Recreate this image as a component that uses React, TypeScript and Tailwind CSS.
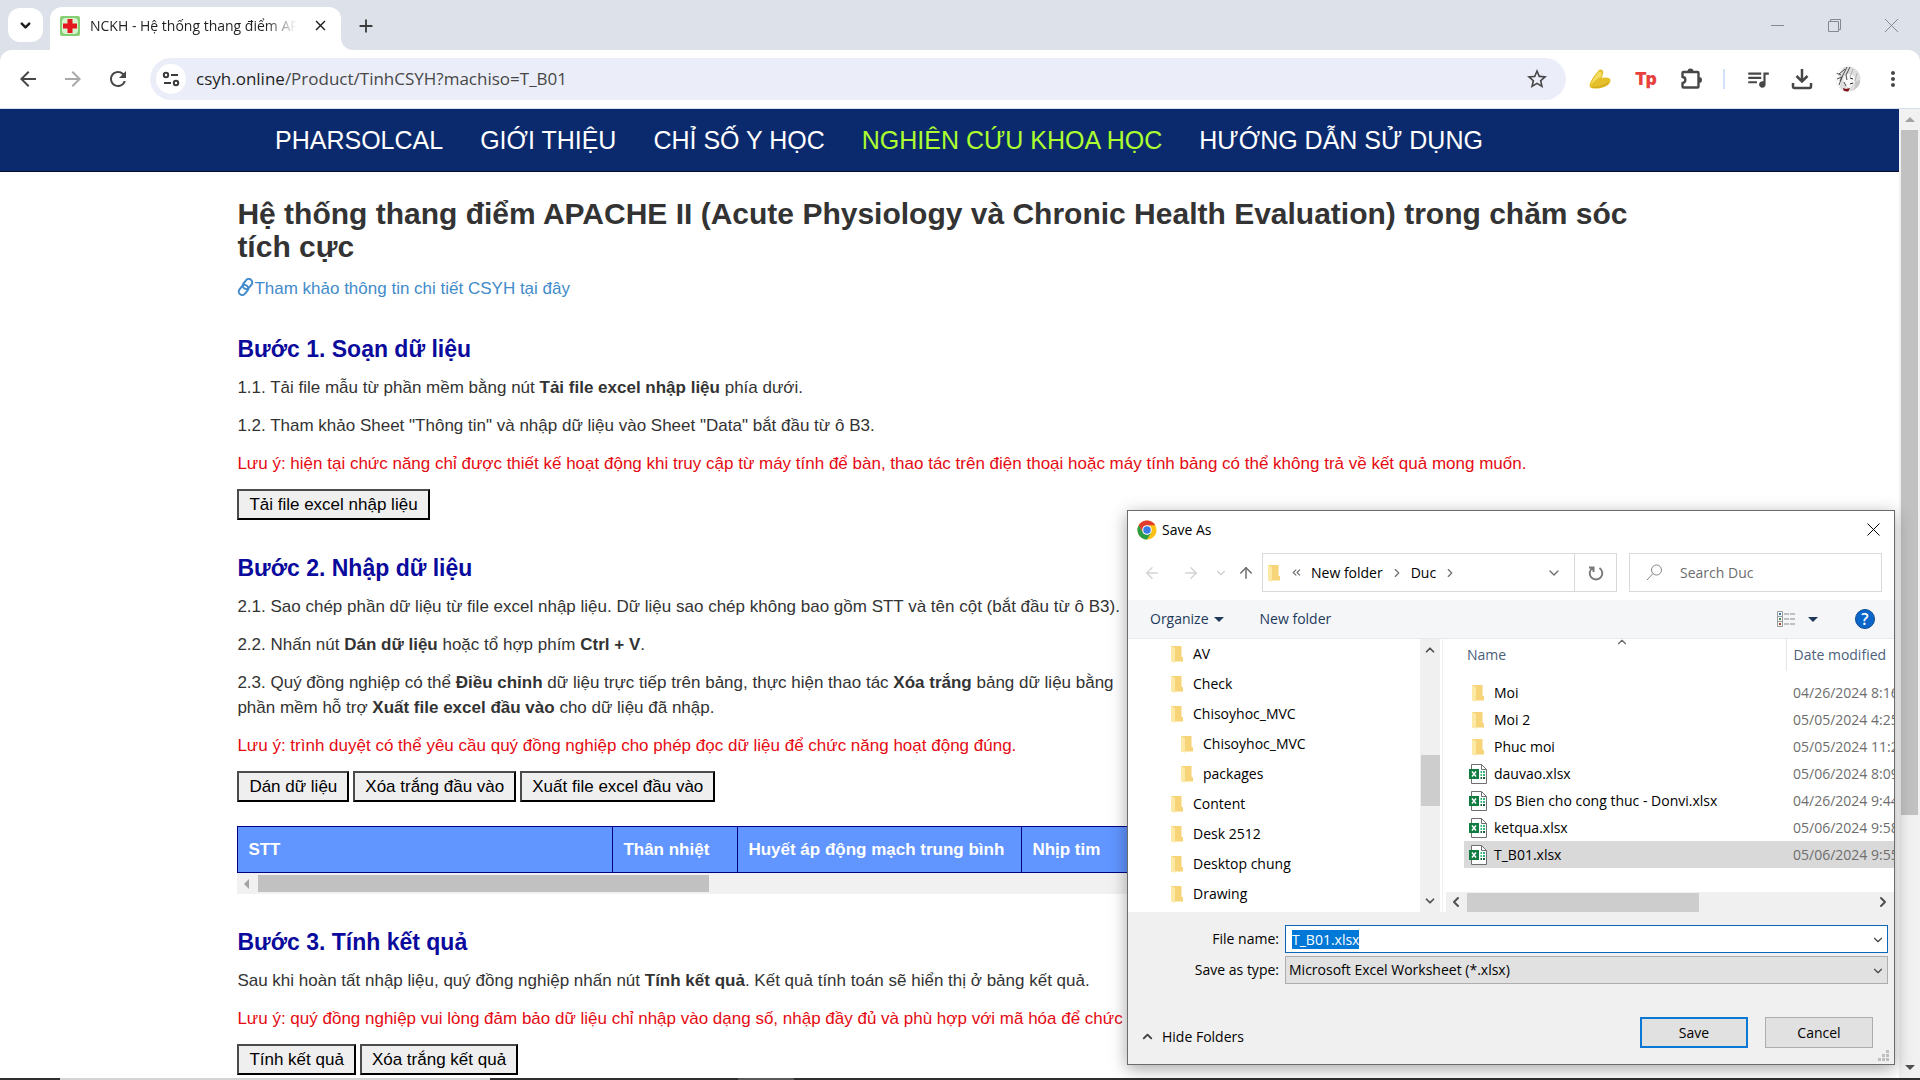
import { useEffect, useRef } from 'react';
import type { ReactNode } from 'react';
import {
  MdAdd,
  MdArrowBack,
  MdArrowForward,
  MdClose,
  MdMoreVert,
  MdQueueMusic,
  MdRefresh,
  MdStarOutline
} from 'react-icons/md';
import { ArrowLeft, ArrowRight, ArrowUp, ChevronDown, ChevronLeft, ChevronRight, ChevronUp, ChevronsLeft } from 'lucide-react';

const navItems = [
  { label: 'PHARSOLCAL' },
  { label: 'GIỚI THIỆU' },
  { label: 'CHỈ SỐ Y HỌC' },
  { label: 'NGHIÊN CỨU KHOA HỌC', active: true },
  { label: 'HƯỚNG DẪN SỬ DỤNG' }
];

const treeItems = [
  { name: 'AV' },
  { name: 'Check' },
  { name: 'Chisoyhoc_MVC' },
  { name: 'Chisoyhoc_MVC', nested: true },
  { name: 'packages', nested: true },
  { name: 'Content' },
  { name: 'Desk 2512' },
  { name: 'Desktop chung' },
  { name: 'Drawing' }
];

const files = [
  { name: 'Moi', date: '04/26/2024 8:16 AM', folder: true },
  { name: 'Moi 2', date: '05/05/2024 4:25 PM', folder: true },
  { name: 'Phuc moi', date: '05/05/2024 11:29 AM', folder: true },
  { name: 'dauvao.xlsx', date: '05/06/2024 8:09 AM' },
  { name: 'DS Bien cho cong thuc - Donvi.xlsx', date: '04/26/2024 9:44 AM' },
  { name: 'ketqua.xlsx', date: '05/06/2024 9:58 AM' },
  { name: 'T_B01.xlsx', date: '05/06/2024 9:55 AM', selected: true }
];

/* ---------- icons ---------- */

function CrossFavicon() {
  return (
    <svg width="20" height="20" viewBox="0 0 20 20" className="shrink-0">
      <rect width="20" height="20" rx="2" fill="#86cf73" />
      <rect x="2" y="2" width="16" height="16" rx="4" fill="#d8f3cf" />
      <path d="M7.500 3h5v4.500h4.500v5h-4.500v4.500h-5v-4.500h-4.500v-5h4.500z" fill="#e3171c" />
    </svg>
  );
}

function TuneIcon() {
  return (
    <svg width="18" height="16" viewBox="0 0 18 16" fill="none" stroke="#3c3c3c" strokeWidth="2">
      <circle cx="4" cy="4" r="2.200" />
      <path d="M9 4h7M2 12h7" />
      <circle cx="14" cy="12" r="2.200" />
    </svg>
  );
}

function BananaIcon() {
  return (
    <svg width="22" height="20" viewBox="0 0 22 20">
      <path d="M10 1C13-.5 15 2 14 5C13.500 7 13 8 13 9C17 8 21 8.500 21.500 11C22 14 18 18 12 19C7 20 1 20 .5 17C.5 13 6 5 10 1Z" fill="#e6c02b" />
      <path d="M10 2.500C6 7 3 12 2 16C5 12 9 9 12 8C13 5 13 2 10 2.500Z" fill="#f4dd62" />
      <path d="M3 18.200c6 .3 12-1 16.500-4.500" fill="none" stroke="#cfa51c" strokeWidth="1.200" />
    </svg>
  );
}

function PuzzleIcon() {
  return (
    <svg width="24" height="24" viewBox="0 0 24 24" fill="none" stroke="#474747" strokeWidth="2.400" strokeLinejoin="round">
      <path d="M4.500 5h14a1 1 0 0 1 1 1v13.500a1 1 0 0 1-1 1h-14a1 1 0 0 1-1-1V16c3.800 0 3.800-6 0-6V6a1 1 0 0 1 1-1z" />
      <path d="M8.500 4.500a3 3 0 0 1 6 0zM20 10a3 3 0 0 1 0 6z" fill="#474747" stroke="none" />
    </svg>
  );
}

function DownloadTrayIcon() {
  return (
    <svg width="22" height="22" viewBox="0 0 22 22" fill="none" stroke="#474747" strokeWidth="2.500">
      <path d="M11 1v12M5.500 8l5.500 5.500L16.500 8M2 15v3.500a1.500 1.500 0 0 0 1.500 1.500h15a1.500 1.500 0 0 0 1.500-1.500V15" />
    </svg>
  );
}

function Avatar() {
  return (
    <svg width="26" height="26" viewBox="0 0 26 26">
      <defs>
        <clipPath id="avatar">
          <circle cx="13" cy="13" r="12.500" />
        </clipPath>
      </defs>
      <g clipPath="url(#avatar)">
        <rect width="26" height="26" fill="#dedede" />
        <path d="M0 0h9L4 10l2 6-3 10H0z" fill="#fafafa" />
        <path d="M10 9c3-2 9-1 10 3 0 4-3 8-6 10-3-1-6-6-6-9z" fill="#f8f8f8" />
        <path d="M12 1L8 9l-3 6M15 1l-4 8 1 5M1 7l5 2M2 13l5-2-3 8M10 3L4 8M9 16l2 4" stroke="#4c4c4c" strokeWidth="1" fill="none" />
        <path d="M18 3l-3 8M22 7l-2 8" stroke="#b0b0b0" strokeWidth="1" fill="none" />
        <path d="M15 12l3 1M15 18l3-1" stroke="#222" strokeWidth="1" />
        <path d="M8 22l3 1 4-1-2 4H9z" fill="#7d0f16" />
        <path d="M20 16c1 3 0 6-3 9h8V14z" fill="#c6c6c6" />
      </g>
    </svg>
  );
}

function ChromeLogo() {
  return (
    <svg width="20" height="20" viewBox="0 0 48 48" className="shrink-0">
      <circle cx="24" cy="24" r="23" fill="#fbc116" />
      <path d="M24 12.500h19.900A23 23 0 0 0 4.100 12.500L14 29.700z" fill="#e33b2e" />
      <path d="M4.100 12.500A23 23 0 0 0 24 47l10-17.300-10 5.800-10-5.800z" fill="#2a9d48" />
      <circle cx="24" cy="24" r="11.500" fill="#fff" />
      <circle cx="24" cy="24" r="9" fill="#3a7be8" />
    </svg>
  );
}

function FolderIcon() {
  return (
    <svg width="12" height="18" viewBox="0 0 12 18" className="shrink-0">
      <path d="M0 1h10.500v10.500l1.500 1v4H0z" fill="#f6d477" />
      <path d="M0 1l4 2v15l-4-2z" fill="#fde9a6" />
    </svg>
  );
}

function ExcelIcon() {
  return (
    <svg width="18" height="20" viewBox="0 0 18 20" className="shrink-0">
      <path d="M2.500.5h10l5 5v14h-15z" fill="#fff" stroke="#6f6f6f" />
      <path d="M12.500.5v5h5" fill="none" stroke="#6f6f6f" />
      <path d="M11.500 8h1.500M14 8h2M11.500 11h1.500M14 11h2" stroke="#33b87a" strokeWidth="2" />
      <path d="M11.500 14h1.500M14 14h2" stroke="#185c37" strokeWidth="2" />
      <rect y="5" width="10" height="10" fill="#107c41" />
      <path d="M3 7.500l4 5M7 7.500l-4 5" stroke="#fff" strokeWidth="1.500" />
    </svg>
  );
}

function ChainIcon() {
  return (
    <svg width="17" height="18" viewBox="0 0 17 18" fill="none" stroke="#428bca" strokeWidth="2" className="inline-block align-[-2px]">
      <rect x="5" y="2.500" width="11" height="7" rx="3.500" transform="rotate(-52 10.500 6)" />
      <rect x="1" y="8.500" width="11" height="7" rx="3.500" transform="rotate(-52 6.500 12)" />
    </svg>
  );
}

function Triangle({ direction, color }: { direction: 'up' | 'down' | 'left'; color: string }) {
  const shapes = { up: 'M1 8L6 3l5 5z', down: 'M1 4l5 5 5-5z', left: 'M8 1L3 6l5 5z' };
  return (
    <svg width="12" height="12" viewBox="0 0 12 12" fill={color}>
      <path d={shapes[direction]} />
    </svg>
  );
}

/* ---------- browser ---------- */

function TabStrip() {
  return (
    <div className="flex h-[50px] items-end bg-[#dde1e9]">
      <button className="mb-2 ml-2 flex h-[34px] w-[35px] items-center justify-center rounded-xl bg-white" title="Search tabs">
        <ChevronDown size={15} strokeWidth={4} color="#1f1f1f" />
      </button>
      <div className="ml-[7px] flex h-[43px] w-[291px] items-center rounded-t-xl bg-white pr-3 pb-1.5 pl-2.5">
        <CrossFavicon />
        <span className="ml-2.5 w-[207px] overflow-hidden bg-linear-to-r from-[#1f1f1f] from-85% to-transparent bg-clip-text text-sm whitespace-nowrap text-transparent">
          NCKH - Hệ thống thang điểm APACHE II
        </span>
        <button className="ml-auto" title="Close tab">
          <MdClose size={17} color="#1f1f1f" />
        </button>
      </div>
      {/* flare where the active tab meets the toolbar */}
      <svg width="12" height="12" viewBox="0 0 12 12" fill="#fff">
        <path d="M0 0v12h12A12 12 0 0 1 0 0z" />
      </svg>
      <button className="mb-[13px] ml-0.5" title="New tab">
        <MdAdd size={22} color="#3c3c3c" />
      </button>
      <div className="mr-[22px] mb-[18px] ml-auto flex gap-11 text-[#85888f]">
        <button title="Minimize">
          <svg width="13" height="13" viewBox="0 0 13 13" stroke="currentColor">
            <path d="M0 6.500h13" />
          </svg>
        </button>
        <button title="Restore">
          <svg width="13" height="13" viewBox="0 0 13 13" fill="none" stroke="currentColor">
            <path d="M.5 2.500h10v10h-10zM2.500 2.500v-2h10v10h-2" />
          </svg>
        </button>
        <button title="Close">
          <svg width="13" height="13" viewBox="0 0 13 13" stroke="currentColor">
            <path d="M0 0l13 13M13 0L0 13" />
          </svg>
        </button>
      </div>
    </div>
  );
}

function Toolbar() {
  return (
    <div className="bg-[#dde1e9]">
      <div className="flex h-[59px] items-center rounded-t-xl border-b border-[#d5dfee] bg-white pr-[15px] pl-4">
        <div className="flex gap-[21px]">
          <button title="Back"><MdArrowBack size={24} color="#474747" /></button>
          <button title="Forward"><MdArrowForward size={24} color="#a9a9a9" /></button>
          <button title="Reload"><MdRefresh size={24} color="#474747" /></button>
        </div>
        <div className="ml-5 flex h-[42px] min-w-0 flex-1 items-center rounded-full bg-[#ebeef8] pr-[17px] pl-1.5">
          <button className="flex size-[30px] shrink-0 items-center justify-center rounded-full bg-white" title="Site information">
            <TuneIcon />
          </button>
          <p className="ml-2.5 flex-1 truncate text-[17px] text-[#474747]">
            <span className="text-[#1f1f1f]">csyh.online</span>/Product/TinhCSYH?machiso=T_B01
          </p>
          <button title="Bookmark this tab"><MdStarOutline size={24} color="#474747" stroke="#474747" strokeWidth={0} /></button>
        </div>
        <div className="ml-[23px] flex items-center">
          <button title="Banana"><BananaIcon /></button>
          <button className="ml-6 w-5 font-['Inter'] text-[17px] leading-5 font-black text-[#e8403c]" title="Tp">Tp</button>
          <button className="ml-6" title="Extensions"><PuzzleIcon /></button>
          <span className="mr-5 ml-5 h-5 w-0.5 bg-[#d3e1f8]" />
          <button title="Media controls"><MdQueueMusic size={26} color="#474747" /></button>
          <button className="ml-5" title="Downloads"><DownloadTrayIcon /></button>
          <button className="ml-[22px]" title="Profile"><Avatar /></button>
          <button className="ml-5" title="Menu"><MdMoreVert size={24} color="#474747" /></button>
        </div>
      </div>
    </div>
  );
}

/* ---------- page ---------- */

function PageButton({ children }: { children: ReactNode }) {
  return (
    <button className="h-[31px] border-2 border-t-[#4b4b4b] border-r-black border-b-black border-l-[#4b4b4b] bg-[#efefef] px-2.5 leading-[25px] text-black">
      {children}
    </button>
  );
}

function Step({ title, children }: { title: string; children: ReactNode }) {
  return (
    <section className="mt-9 flex flex-col gap-[13px]">
      <h3 className="text-[23px] leading-[25px] font-bold text-[#0a0a9c]">{title}</h3>
      {children}
    </section>
  );
}

function Note({ children }: { children: ReactNode }) {
  return <p className="text-[#e50b12]">{children}</p>;
}

function InputTable() {
  return (
    <div className="mt-[11px] overflow-hidden">
      <table className="w-[1600px] table-fixed border-collapse">
        <thead>
          <tr className="h-[46px] bg-[#6195ff] text-left text-white">
            <th className="w-[375px] border border-[#000080] px-2.5">STT</th>
            <th className="w-[125px] border border-[#000080] px-2.5">Thân nhiệt</th>
            <th className="w-[284px] border border-[#000080] px-2.5 whitespace-nowrap">Huyết áp động mạch trung bình</th>
            <th className="border border-[#000080] px-2.5">Nhịp tim</th>
          </tr>
        </thead>
      </table>
      <div className="flex h-[21px] items-center bg-[#f1f1f1] pl-1">
        <Triangle direction="left" color="#a3a3a3" />
        <div className="ml-[5px] h-[17px] w-[451px] bg-[#c1c1c1]" />
      </div>
    </div>
  );
}

function Page() {
  return (
    <div className="min-w-0 flex-1 font-['Liberation_Sans',sans-serif] text-[17px] leading-[25px] text-[#333]">
      <nav className="flex h-[63px] items-center gap-[37px] border-b border-[#050d2b] bg-[#0b2a6e] pl-[275px] text-[25px] whitespace-nowrap text-white">
        {navItems.map((item) => (
          <a key={item.label} href="#" className={item.active ? 'text-[#adff2f]' : ''}>
            {item.label}
          </a>
        ))}
      </nav>
      <main className="mx-auto w-3/4">
        <h2 className="pt-[25px] text-3xl leading-[33px] font-bold">
          Hệ thống thang điểm APACHE II (Acute Physiology và Chronic Health Evaluation) trong chăm sóc tích cực
        </h2>
        <p className="mt-[13px]">
          <a href="#" className="text-[#428bca]">
            <ChainIcon />
            Tham khảo thông tin chi tiết CSYH tại đây
          </a>
        </p>

        <Step title="Bước 1. Soạn dữ liệu">
          <p>1.1. Tải file mẫu từ phần mềm bằng nút <b>Tải file excel nhập liệu</b> phía dưới.</p>
          <p>1.2. Tham khảo Sheet "Thông tin" và nhập dữ liệu vào Sheet "Data" bắt đầu từ ô B3.</p>
          <Note>
            Lưu ý: hiện tại chức năng chỉ được thiết kế hoạt động khi truy cập từ máy tính để bàn, thao tác trên điện thoại hoặc máy tính bảng có thể không trả về kết quả mong muốn.
          </Note>
          <div className="flex gap-1">
            <PageButton>Tải file excel nhập liệu</PageButton>
          </div>
        </Step>

        <Step title="Bước 2. Nhập dữ liệu">
          <p>2.1. Sao chép phần dữ liệu từ file excel nhập liệu. Dữ liệu sao chép không bao gồm STT và tên cột (bắt đầu từ ô B3).</p>
          <p>2.2. Nhấn nút <b>Dán dữ liệu</b> hoặc tổ hợp phím <b>Ctrl + V</b>.</p>
          <p>
            2.3. Quý đồng nghiệp có thể <b>Điều chỉnh</b> dữ liệu trực tiếp trên bảng, thực hiện thao tác <b>Xóa trắng</b> bảng dữ liệu bằng
            <br />
            phần mềm hỗ trợ <b>Xuất file excel đầu vào</b> cho dữ liệu đã nhập.
          </p>
          <Note>Lưu ý: trình duyệt có thể yêu cầu quý đồng nghiệp cho phép đọc dữ liệu để chức năng hoạt động đúng.</Note>
          <div className="flex gap-1">
            <PageButton>Dán dữ liệu</PageButton>
            <PageButton>Xóa trắng đầu vào</PageButton>
            <PageButton>Xuất file excel đầu vào</PageButton>
          </div>
          <InputTable />
        </Step>

        <Step title="Bước 3. Tính kết quả">
          <p>Sau khi hoàn tất nhập liệu, quý đồng nghiệp nhấn nút <b>Tính kết quả</b>. Kết quả tính toán sẽ hiển thị ở bảng kết quả.</p>
          <Note>Lưu ý: quý đồng nghiệp vui lòng đảm bảo dữ liệu chỉ nhập vào dạng số, nhập đầy đủ và phù hợp với mã hóa để chức năng</Note>
          <div className="flex gap-1">
            <PageButton>Tính kết quả</PageButton>
            <PageButton>Xóa trắng kết quả</PageButton>
          </div>
        </Step>
      </main>
    </div>
  );
}

function PageScrollbar() {
  return (
    <div className="flex w-[21px] shrink-0 flex-col items-center bg-[#f1f1f1] py-[5px]">
      <Triangle direction="up" color="#a3a3a3" />
      <div className="mt-1 w-[17px] flex-5 bg-[#c1c1c1]" />
      <div className="flex-[1.800]" />
      <Triangle direction="down" color="#505050" />
    </div>
  );
}

/* ---------- save dialog ---------- */

function AddressRow() {
  return (
    <div className="mt-[5px] flex h-[39px] items-center pr-3 pl-[15px]">
      <button title="Back"><ArrowLeft size={18} color="#d4d4d4" /></button>
      <button className="ml-[21px]" title="Forward"><ArrowRight size={18} color="#d4d4d4" /></button>
      <button className="ml-3.5" title="Recent locations"><ChevronDown size={14} color="#cfcfcf" /></button>
      <button className="ml-[9px]" title="Up"><ArrowUp size={18} color="#6d6d6d" /></button>
      <div className="ml-[7px] flex h-full flex-1 items-center border border-[#d9d9d9] pl-[5px] text-black">
        <FolderIcon />
        <ChevronsLeft size={13} color="#6d6d6d" className="ml-2.5" />
        <span className="ml-2">New folder</span>
        <ChevronRight size={14} color="#6d6d6d" className="ml-[7px]" />
        <span className="ml-[7px]">Duc</span>
        <ChevronRight size={14} color="#6d6d6d" className="ml-[7px]" />
        <button className="mr-3 ml-auto" title="Previous locations"><ChevronDown size={16} color="#6d6d6d" /></button>
        <button className="flex h-full w-[42px] items-center justify-center border-l border-[#d9d9d9]" title="Refresh">
          <svg width="16" height="16" viewBox="0 0 16 16" fill="none" stroke="#7a7a7a" strokeWidth="2">
            <path d="M11.500 3a6.300 6.300 0 1 1-7 0M1 2.500h4.500V7" />
          </svg>
        </button>
      </div>
      <div className="ml-3 flex h-full w-[253px] items-center border border-[#d9d9d9] pl-4">
        <svg width="17" height="17" viewBox="0 0 17 17" fill="none" stroke="#858585">
          <circle cx="10.500" cy="6" r="5" />
          <path d="M7 9.500L1 16" />
        </svg>
        <input aria-label="Search Duc" placeholder="Search Duc" className="ml-[17px] min-w-0 flex-1 outline-none placeholder:text-[#6d6d6d]" />
      </div>
    </div>
  );
}

function CommandRow() {
  return (
    <div className="mt-2 flex h-[39px] items-center border-b border-[#e6eaee] bg-[#f4f6f8] pr-[19px] pl-[22px] text-[#1e395b]">
      <button className="flex items-center gap-1">Organize <Triangle direction="down" color="#1e395b" /></button>
      <button className="ml-[35px]">New folder</button>
      <button className="ml-auto flex items-center gap-3" title="Change your view">
        <svg width="18" height="16" viewBox="0 0 18 16" fill="none">
          <path d="M.5.5h5v15h-5zM.5 5.500h5M.5 10.500h5" stroke="#9a9a9a" />
          <path d="M7 3h5M13 3h5M7 8h5M13 8h5M7 13h5M13 13h5" stroke="#8a8a8a" />
          <path d="M2 3h2" stroke="#3a78b5" strokeWidth="2" />
          <path d="M2 8h2" stroke="#4d8a5a" strokeWidth="2" />
          <path d="M2 13h2" stroke="#a8442a" strokeWidth="2" />
        </svg>
        <Triangle direction="down" color="#1e395b" />
      </button>
      <button className="ml-9 flex size-5 items-center justify-center rounded-full border border-[#0a4c94] bg-[#0a66c8] text-base leading-none font-semibold text-white" title="Get help">?</button>
    </div>
  );
}

function FolderTree() {
  return (
    <div className="flex w-[315px] shrink-0 border-r border-[#f0f0f0]">
      <ul className="flex-1">
        {treeItems.map((item, i) => (
          <li key={i} className={item.nested ? 'flex h-[30px] items-center gap-2.5 pl-[53px]' : 'flex h-[30px] items-center gap-2.5 pl-[43px]'}>
            <FolderIcon />
            {item.name}
          </li>
        ))}
      </ul>
      <div className="mr-0.5 flex w-5 flex-col items-center bg-[#f0f0f0] py-1">
        <ChevronUp size={14} strokeWidth={3} color="#505050" />
        <div className="flex-2" />
        <div className="h-[51px] w-[19px] bg-[#cdcdcd]" />
        <div className="flex-[1.800]" />
        <ChevronDown size={14} strokeWidth={3} color="#505050" />
      </div>
    </div>
  );
}

function FileList() {
  return (
    <div className="flex min-w-0 flex-1 flex-col pl-[3px]">
      <div className="relative flex-1 overflow-hidden pl-[18px]">
        <ChevronUp size={14} strokeWidth={2} color="#666" className="absolute -top-1 left-[169px]" />
        <table className="w-[520px] table-fixed border-collapse whitespace-nowrap">
          <thead>
            <tr className="h-8 text-left text-[#4c607a]">
              <th className="w-[322px] border-r border-[#e5e5e5] pl-[3px] font-normal">Name</th>
              <th className="pl-[7px] font-normal">Date modified</th>
            </tr>
            <tr className="h-2" />
          </thead>
          <tbody>
            {files.map((file) => (
              <tr key={file.name} className={file.selected ? 'h-[27px] bg-[#d9d9d9]' : 'h-[27px]'}>
                <td className="p-0">
                  <span className="flex items-center">
                    <span className="ml-[5px] flex w-[25px]">
                      {file.folder ? <span className="pl-[3px]"><FolderIcon /></span> : <ExcelIcon />}
                    </span>
                    {file.name}
                  </span>
                </td>
                <td className="p-0 pl-[7px] text-[#6d6d6d]">{file.date}</td>
              </tr>
            ))}
          </tbody>
        </table>
      </div>
      <div className="flex h-5 items-center bg-[#f0f0f0] pr-[3px] pl-0.5">
        <ChevronLeft size={16} strokeWidth={3} color="#505050" />
        <div className="ml-[3px] h-[19px] w-[232px] bg-[#cdcdcd]" />
        <ChevronRight size={16} strokeWidth={3} color="#505050" className="ml-auto" />
      </div>
    </div>
  );
}

function SaveDialog() {
  const fileNameRef = useRef<HTMLInputElement>(null);

  useEffect(() => {
    fileNameRef.current?.focus();
    fileNameRef.current?.select();
  }, []);

  return (
    <div
      role="dialog"
      aria-label="Save As"
      className="absolute right-[25px] bottom-[15px] flex w-[768px] flex-col border border-[#6b6b6b] bg-white text-sm text-black shadow-[0_4px_16px_rgba(0,0,0,0.35)]"
    >
      <div className="flex h-[37px] items-center pr-3.5 pl-[9px]">
        <ChromeLogo />
        <span className="ml-[5px]">Save As</span>
        <button className="ml-auto" title="Close">
          <svg width="13" height="13" viewBox="0 0 13 13" stroke="#000">
            <path d="M.5.5l12 12M12.500.5l-12 12" />
          </svg>
        </button>
      </div>
      <AddressRow />
      <CommandRow />
      <div className="flex h-[273px] overflow-hidden">
        <FolderTree />
        <FileList />
      </div>
      <div className="bg-[#f0f0f0] pt-[13px] pr-1.5">
        <div className="grid grid-cols-[157px_1fr] gap-y-[3px]">
          <label htmlFor="file-name" className="self-center pr-1.5 text-right">File name:</label>
          <div className="relative">
            <input
              id="file-name"
              ref={fileNameRef}
              defaultValue="T_B01.xlsx"
              className="h-7 w-full border border-[#0a66b8] bg-white pl-1.5 outline-none selection:bg-[#0078d7] selection:text-white"
            />
            <ChevronDown size={14} strokeWidth={2} color="#444" className="absolute top-2 right-[3px]" />
          </div>
          <label htmlFor="file-type" className="self-center pr-1.5 text-right">Save as type:</label>
          <div className="relative">
            <select id="file-type" className="h-7 w-full appearance-none border border-[#adadad] bg-[#e1e1e1] pl-[3px]">
              <option>Microsoft Excel Worksheet (*.xlsx)</option>
            </select>
            <ChevronDown size={14} strokeWidth={2} color="#444" className="pointer-events-none absolute top-2 right-[3px]" />
          </div>
        </div>
        <div className="mt-[33px] flex items-center pr-[15px] pl-3">
          <button className="mt-2 flex items-center gap-[7px]">
            <ChevronUp size={15} strokeWidth={3} color="#404040" />
            Hide Folders
          </button>
          <button className="ml-auto h-[31px] w-[108px] border-2 border-[#0a78d4] bg-[#e1e1e1]">Save</button>
          <button className="ml-[17px] h-[31px] w-[108px] border border-[#adadad] bg-[#e1e1e1]">Cancel</button>
        </div>
        <svg width="12" height="12" viewBox="0 0 12 12" fill="#bfbfbf" className="mt-0.5 -mr-0.5 mb-0.5 ml-auto">
          <path d="M8 0h3v3h-3zM8 4h3v3h-3zM8 8h3v3h-3zM4 4h3v3h-3zM4 8h3v3h-3zM0 8h3v3h-3z" />
        </svg>
      </div>
    </div>
  );
}

export default function App() {
  return (
    <div className="relative flex h-screen flex-col overflow-hidden bg-white font-['Open_Sans',sans-serif]">
      <TabStrip />
      <Toolbar />
      <div className="flex min-h-0 flex-1 overflow-hidden">
        <Page />
        <PageScrollbar />
      </div>
      {/* top edge of the taskbar */}
      <div className="flex h-0.5 shrink-0 bg-[#2f2d2e]">
        <div className="ml-[60px] w-[430px] bg-[#d4d4d4]" />
        <div className="ml-[248px] w-14 bg-[#5a5859]" />
      </div>
      <SaveDialog />
    </div>
  );
}
